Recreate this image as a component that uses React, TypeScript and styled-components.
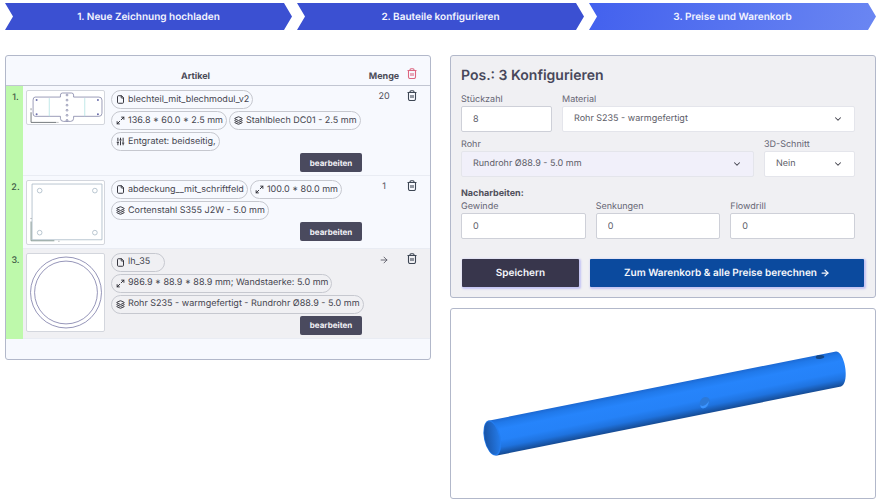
import React from "react";
import styled, { createGlobalStyle, css } from "styled-components";
import {
  ArrowRight,
  ChevronDown,
  File,
  Layers,
  Maximize2,
  SlidersVertical,
} from "lucide-react";

const GlobalStyle = createGlobalStyle`
  *, *::before, *::after { box-sizing: border-box; }
  body {
    margin: 0;
    background: #ffffff;
    color: #50505c;
    font-family: Inter, "Liberation Sans", sans-serif;
    font-size: 9px;
    line-height: 12px;
    text-rendering: geometricPrecision;
  }
  button, input, select {
    font: inherit;
    color: inherit;
    margin: 0;
    text-rendering: inherit;
  }
`;

const Page = styled.div`
  padding: 3px 4px 3px 5px;
`;

const Steps = styled.nav`
  display: grid;
  grid-template-columns: repeat(3, 1fr);
  gap: 5px;
  margin-bottom: 25px;
`;

const Step = styled.a<{ $current?: boolean }>`
  display: flex;
  align-items: center;
  justify-content: center;
  height: 27px;
  padding-top: 1px;
  color: #f4f5ff;
  font-size: 10px;
  font-weight: 600;
  text-decoration: none;
  background: ${(p) =>
    p.$current ? "linear-gradient(100deg, #4361ee, #6a86f2)" : "#3b50d2"};
  clip-path: polygon(
    0 0,
    calc(100% - 8px) 0,
    100% 50%,
    calc(100% - 8px) 100%,
    0 100%,
    8px 50%
  );
`;

const Columns = styled.main`
  display: grid;
  grid-template-columns: minmax(0, 1fr) minmax(0, 1fr);
  gap: 19px;
  align-items: start;
`;

const Stack = styled.div`
  display: grid;
  gap: 10px;
`;

const card = css`
  border: 1px solid #b2b8ca;
  border-radius: 3px;
`;

const ArticleCard = styled.section`
  ${card}
  overflow: hidden;
  padding-bottom: 20px;
  background: #f7f9fe;
`;

const ConfigCard = styled.section`
  ${card}
  padding: 10px;
  background: #f0f0f3;
`;

const PreviewCard = styled.section`
  ${card}
  background: #ffffff;
  svg { display: block; width: 100%; height: auto; }
`;

const Table = styled.table`
  width: 100%;
  table-layout: fixed;
  border-collapse: separate;
  border-spacing: 0;
`;

const Column = styled.col<{ $width?: number }>`
  width: ${(p) => (p.$width ? `${p.$width}px` : "auto")};
`;

const HeadCell = styled.th`
  height: 30px;
  padding: 0 0 2px;
  vertical-align: bottom;
  border-bottom: 1px solid #c2c6d2;
  font-size: 9px;
  font-weight: 700;
  color: #4b4b58;
  white-space: nowrap;
`;

const Row = styled.tr<{ $active?: boolean }>`
  background: ${(p) => (p.$active ? "#f0f0f3" : "transparent")};
`;

const Cell = styled.td`
  padding: 4px 0 3px;
  vertical-align: top;
  border-bottom: 1px solid #e9ecf3;
`;

const NumberCell = styled(Cell)`
  padding: 6px 0 0 2px;
  background: #bef9ab;
  border-bottom-color: #bef9ab;
  text-align: center;
  font-weight: 500;
  color: #3f5a46;
`;

const ThumbCell = styled(Cell)`
  padding: 4px 6px 3px 3px;
`;

const AmountCell = styled(Cell)`
  text-align: center;
  padding-top: 5px;
  svg { display: block; margin: 1px auto 0; }
`;

const iconCell = css`
  padding-right: 6px;
  text-align: center;
`;

const DeleteHead = styled(HeadCell)`
  ${iconCell}
`;

const DeleteCell = styled(Cell)`
  ${iconCell}
`;

const IconButton = styled.button<{ $tone?: string }>`
  display: inline-flex;
  padding: 0;
  border: 0;
  background: none;
  color: ${(p) => p.$tone ?? "#3d4653"};
  cursor: pointer;
`;

const Thumb = styled.div`
  padding: 1px;
  border: 1px solid #d3d6dd;
  border-radius: 2px;
  background: #ffffff;
  svg { display: block; width: 100%; height: auto; }
`;

const Pills = styled.ul`
  display: flex;
  flex-wrap: wrap;
  gap: 2px;
  margin: 0 0 2px;
  padding: 0;
  list-style: none;
`;

const Pill = styled.li`
  display: inline-flex;
  align-items: center;
  gap: 3px;
  min-width: 54px;
  height: 19px;
  padding: 0 3px 0 4px;
  border: 1px solid #c6c8cf;
  border-radius: 10px;
  white-space: nowrap;
  color: #45454f;
  svg { flex: none; color: #2b2b33; }
`;

const EditRow = styled.div`
  display: flex;
  justify-content: flex-end;
  padding-right: 6px;
`;

const EditButton = styled.button`
  width: 62px;
  height: 19px;
  padding: 0;
  border: 0;
  border-radius: 2px;
  background: #4a4a5e;
  color: #f3f3f7;
  font-size: 8px;
  font-weight: 700;
`;

const Title = styled.h1`
  margin: 0 0 7px;
  font-size: 14px;
  line-height: 20px;
  font-weight: 600;
  color: #47475a;
`;

const Form = styled.form`
  display: block;
`;

const Fields = styled.div<{ $columns: string }>`
  display: grid;
  grid-template-columns: ${(p) => p.$columns};
  gap: 10px;
  margin: 0 10px 6px 0;
`;

const Field = styled.div`
  min-width: 0;
`;

const Label = styled.label`
  display: block;
  line-height: 13px;
  color: #666673;
`;

const GroupTitle = styled.h2`
  margin: 10px 0 0;
  font-size: 9px;
  line-height: 13px;
  font-weight: 700;
`;

const control = css`
  display: block;
  width: 100%;
  height: 26px;
  padding: 0 11px;
  border: 1px solid #ced0d8;
  border-radius: 2px;
  background: #ffffff;
  color: #5d5d68;
  outline: none;
`;

const Input = styled.input`
  ${control}
`;

const SelectBox = styled.div`
  position: relative;
  svg {
    position: absolute;
    top: 8px;
    right: 12px;
    pointer-events: none;
    color: #42424c;
  }
`;

const Select = styled.select<{ $muted?: boolean }>`
  ${control}
  appearance: none;
  border-color: #e4e5eb;
  background: ${(p) => (p.$muted ? "#f1f0fa" : "#ffffff")};
`;

const Actions = styled.div`
  display: grid;
  grid-template-columns: 117fr 274fr;
  gap: 11px;
  margin: 20px 1px 0;
`;

const ActionButton = styled.button<{ $primary?: boolean }>`
  display: flex;
  align-items: center;
  justify-content: center;
  gap: 3px;
  height: 28px;
  padding: 0;
  border: 0;
  border-radius: 1px;
  background: ${(p) => (p.$primary ? "#0b4a9e" : "#38364c")};
  box-shadow: 1px 1px 2px 1px #c3c3f4;
  color: #f6f7fb;
  font-size: 10px;
  font-weight: 600;
`;

function TrashIcon() {
  return (
    <svg width="10" height="11" viewBox="0 0 20 22" fill="none" stroke="currentColor" strokeWidth="2.200" strokeLinejoin="round" aria-hidden="true">
      <path d="M1 5h18M6 5V3.500Q6 1.500 8 1.500h4q2 0 2 2V5" />
      <path d="M3 5v13q0 3 3 3h8q3 0 3-3V5" />
      <path d="M8 10v6M12 10v6" />
    </svg>
  );
}

const holeRows = [3, 8, 13, 18, 23, 28];

function SheetDrawing() {
  return (
    <svg viewBox="0 0 74 31" fill="none" stroke="#8587a8" strokeWidth="0.8" role="img" aria-label="Blechteil">
      <path d="M7 5h25V3q0-2 2-2h9q2 0 2 2v2h25q3 0 3 3v13q0 3-3 3H45v2q0 3-3 3h-7q-3 0-3-3v-2H7q-2 0-2-3V8q0-3 2-3z" />
      <path d="M21 6v18M56 6v18" stroke="#b5e4e4" />
      {holeRows.map((y) => (
        <circle key={y} cx="38.500" cy={y} r="0.9" />
      ))}
      <g fill="#6d70ad" stroke="none">
        <circle cx="8.500" cy="8" r="1" />
        <circle cx="8.500" cy="22" r="1" />
        <circle cx="69" cy="8" r="1" />
        <circle cx="69" cy="22" r="1" />
      </g>
      <path d="M3 20v10h25" stroke="#555b61" />
      <path d="M3 16v2M29 30h1" stroke="#84888d" />
    </svg>
  );
}

function PlateDrawing() {
  return (
    <svg viewBox="0 0 74 60" fill="none" stroke="#a9bac6" strokeWidth="0.8" role="img" aria-label="Abdeckung">
      <path d="M4 2h69v55H4z" />
      <circle cx="11.500" cy="8.500" r="2.300" />
      <circle cx="66" cy="8.500" r="2.300" />
      <circle cx="11.500" cy="50" r="2.300" />
      <circle cx="66" cy="50" r="2.300" />
      <path d="M3 39v19h23" stroke="#6f8781" />
      <path d="M2.500 36h1M30 58.500h1" stroke="#84888d" />
    </svg>
  );
}

function RingDrawing() {
  return (
    <svg viewBox="0 0 74 74" fill="none" stroke="#6a6a9c" strokeWidth="0.7" role="img" aria-label="Rohrquerschnitt">
      <circle cx="37.500" cy="37" r="35" />
      <circle cx="37.500" cy="37" r="31" />
    </svg>
  );
}

function TubePreview() {
  return (
    <svg viewBox="0 0 424 189" role="img" aria-label="3D-Ansicht Rundrohr">
      <defs>
        <linearGradient id="tube" gradientUnits="userSpaceOnUse" x1="200" y1="79" x2="207" y2="114">
          <stop offset="0" stopColor="#1c68d2" />
          <stop offset="0.120" stopColor="#2079ea" />
          <stop offset="0.300" stopColor="#2684fb" />
          <stop offset="0.600" stopColor="#2582f8" />
          <stop offset="0.800" stopColor="#1f73df" />
          <stop offset="1" stopColor="#164c95" />
        </linearGradient>
        <linearGradient id="bore" x1="0" y1="0" x2="1" y2="0.300">
          <stop offset="0" stopColor="#184f9e" />
          <stop offset="1" stopColor="#2377e2" />
        </linearGradient>
      </defs>
      <path
        d="M36 112 L385 42.500 C390 42 394.700 54 394.700 65 C394.700 72 393 76 390 77.500 L46 146.500 C36 145 31 119 36 112Z"
        fill="url(#tube)"
      />
      <ellipse cx="41.300" cy="129" rx="8.300" ry="17.900" transform="rotate(-12 41.300 129)" fill="#237df0" />
      <ellipse cx="41" cy="129" rx="7.300" ry="16.900" transform="rotate(-12 41 129)" fill="url(#bore)" />
      <ellipse cx="253.800" cy="93.500" rx="4.800" ry="5.800" transform="rotate(32 253.800 93.500)" fill="#2c79d8" />
      <path d="M249.500 96 Q253 99 258 92 Q257 99 252 99.500 Q249 99 249.500 96Z" fill="#3b94ff" />
      <ellipse cx="369" cy="48" rx="4.300" ry="2" transform="rotate(-6 369 48)" fill="#154787" />
    </svg>
  );
}

const pillIcons = {
  file: File,
  size: Maximize2,
  material: Layers,
  finish: SlidersVertical,
};

type PillKind = keyof typeof pillIcons;

interface Article {
  amount: React.ReactNode;
  drawing: React.ReactNode;
  pills: [PillKind, string][];
  active?: boolean;
}

const articles: Article[] = [
  {
    amount: "20",
    drawing: <SheetDrawing />,
    pills: [
      ["file", "blechteil_mit_blechmodul_v2"],
      ["size", "136.8 * 60.0 * 2.5 mm"],
      ["material", "Stahlblech DC01 - 2.5 mm"],
      ["finish", "Entgratet: beidseitig,"],
    ],
  },
  {
    amount: "1",
    drawing: <PlateDrawing />,
    pills: [
      ["file", "abdeckung__mit_schriftfeld"],
      ["size", "100.0 * 80.0 mm"],
      ["material", "Cortenstahl S355 J2W - 5.0 mm"],
    ],
  },
  {
    amount: <ArrowRight size={10} aria-label="in Bearbeitung" />,
    drawing: <RingDrawing />,
    active: true,
    pills: [
      ["file", "lh_35"],
      ["size", "986.9 * 88.9 * 88.9 mm; Wandstaerke: 5.0 mm"],
      ["material", "Rohr S235 - warmgefertigt - Rundrohr Ø88.9 - 5.0 mm"],
    ],
  },
];

function ArticleTable() {
  return (
    <ArticleCard>
      <Table>
        <colgroup>
          <Column $width={17} />
          <Column $width={88} />
          <Column />
          <Column $width={32} />
          <Column $width={30} />
        </colgroup>
        <thead>
          <tr>
            <HeadCell />
            <HeadCell colSpan={2} scope="col">Artikel</HeadCell>
            <HeadCell scope="col">Menge</HeadCell>
            <DeleteHead>
              <IconButton type="button" $tone="#dd6680" aria-label="Alle löschen">
                <TrashIcon />
              </IconButton>
            </DeleteHead>
          </tr>
        </thead>
        <tbody>
          {articles.map((article, index) => (
            <Row key={index} $active={article.active}>
              <NumberCell>{`${index + 1}.`}</NumberCell>
              <ThumbCell>
                <Thumb>{article.drawing}</Thumb>
              </ThumbCell>
              <Cell>
                <Pills>
                  {article.pills.map(([kind, text]) => {
                    const Icon = pillIcons[kind];
                    return (
                      <Pill key={text}>
                        <Icon size={9} strokeWidth={2.5} aria-hidden="true" />
                        {text}
                      </Pill>
                    );
                  })}
                </Pills>
                <EditRow>
                  <EditButton type="button">bearbeiten</EditButton>
                </EditRow>
              </Cell>
              <AmountCell>{article.amount}</AmountCell>
              <DeleteCell>
                <IconButton type="button" aria-label="Löschen">
                  <TrashIcon />
                </IconButton>
              </DeleteCell>
            </Row>
          ))}
        </tbody>
      </Table>
    </ArticleCard>
  );
}

interface FieldProps {
  id: string;
  label: string;
  value: string;
  muted?: boolean;
}

function TextField({ id, label, value }: FieldProps) {
  return (
    <Field>
      <Label htmlFor={id}>{label}</Label>
      <Input id={id} type="text" inputMode="numeric" defaultValue={value} />
    </Field>
  );
}

function SelectField({ id, label, value, muted }: FieldProps) {
  return (
    <Field>
      <Label htmlFor={id}>{label}</Label>
      <SelectBox>
        <Select id={id} defaultValue={value} $muted={muted}>
          <option>{value}</option>
        </Select>
        <ChevronDown size={10} strokeWidth={2.5} aria-hidden="true" />
      </SelectBox>
    </Field>
  );
}

function ConfigForm() {
  return (
    <ConfigCard>
      <Title>Pos.: 3 Konfigurieren</Title>
      <Form>
        <Fields $columns="91fr 293fr">
          <TextField id="count" label="Stückzahl" value="8" />
          <SelectField id="material" label="Material" value="Rohr S235 - warmgefertigt" />
        </Fields>
        <Fields $columns="293fr 91fr">
          <SelectField id="tube-type" label="Rohr" value="Rundrohr Ø88.9 - 5.0 mm" muted />
          <SelectField id="cut" label="3D-Schnitt" value="Nein" />
        </Fields>
        <GroupTitle>Nacharbeiten:</GroupTitle>
        <Fields $columns="1fr 1fr 1fr">
          <TextField id="thread" label="Gewinde" value="0" />
          <TextField id="sink" label="Senkungen" value="0" />
          <TextField id="flowdrill" label="Flowdrill" value="0" />
        </Fields>
        <Actions>
          <ActionButton type="button">Speichern</ActionButton>
          <ActionButton type="button" $primary>
            Zum Warenkorb &amp; alle Preise berechnen
            <ArrowRight size={10} strokeWidth={3} aria-hidden="true" />
          </ActionButton>
        </Actions>
      </Form>
    </ConfigCard>
  );
}

export default function App() {
  return (
    <>
      <GlobalStyle />
      <Page>
        <Steps>
          <Step href="#upload">1. Neue Zeichnung hochladen</Step>
          <Step href="#configure">2. Bauteile konfigurieren</Step>
          <Step href="#prices" $current>3. Preise und Warenkorb</Step>
        </Steps>
        <Columns>
          <ArticleTable />
          <Stack>
            <ConfigForm />
            <PreviewCard>
              <TubePreview />
            </PreviewCard>
          </Stack>
        </Columns>
      </Page>
    </>
  );
}
